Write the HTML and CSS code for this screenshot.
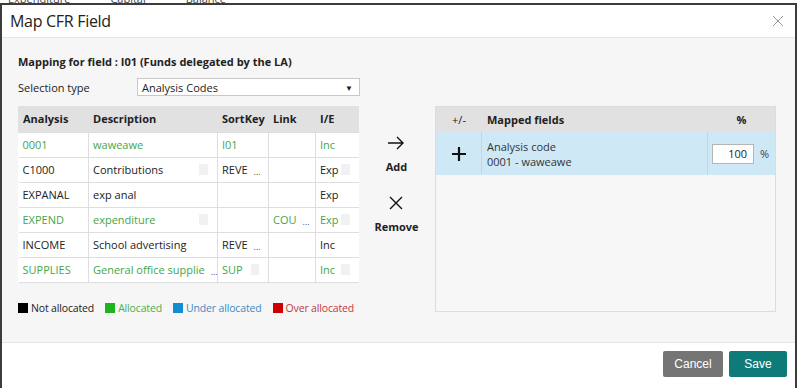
FILE: index.html
```html
<!DOCTYPE html>
<html>
<head>
<meta charset="utf-8">
<link rel="stylesheet" href="styles.css">
</head>
<body>
<div class="page-strip"><span>Expenditure</span><span>Capital</span><span>Balance</span></div>
<div class="modal">
  <div class="modal-header">
    <h1 class="modal-title">Map CFR Field</h1>
    <svg class="close" width="12" height="12" viewBox="0 0 12 12"><path d="M1 1 L11 11 M11 1 L1 11" stroke="#9a9a9a" stroke-width="1" fill="none"/></svg>
  </div>
  <div class="modal-body">
    <div class="field-title">Mapping for field : I01 (Funds delegated by the LA)</div>
    <div class="sel-row">
      <span class="sel-label">Selection type</span>
      <div class="select"><span>Analysis Codes</span><span class="caret">▼</span></div>
    </div>
    <div class="main">
      <div class="left">
        <table class="grid">
          <thead>
            <tr><th class="c1">Analysis</th><th class="c2">Description</th><th class="c3">SortKey</th><th class="c4">Link</th><th class="c5">I/E</th></tr>
          </thead>
          <tbody>
            <tr class="alloc"><td>0001</td><td>waweawe</td><td>I01</td><td></td><td>Inc</td></tr>
            <tr><td>C1000</td><td><div class="cell">Contributions<i class="sq"></i></div></td><td><div class="cell">REVE<b class="ell">...</b></div></td><td></td><td><div class="cell">Exp<i class="sq"></i></div></td></tr>
            <tr><td>EXPANAL</td><td>exp anal</td><td></td><td></td><td>Exp</td></tr>
            <tr class="alloc"><td>EXPEND</td><td><div class="cell">expenditure<i class="sq"></i></div></td><td></td><td><div class="cell">COU<b class="ell">...</b></div></td><td><div class="cell">Exp<i class="sq"></i></div></td></tr>
            <tr><td>INCOME</td><td>School advertising</td><td><div class="cell">REVE<b class="ell">...</b></div></td><td></td><td>Inc</td></tr>
            <tr class="alloc"><td>SUPPLIES</td><td><div class="cell">General office supplie<b class="ell">...</b></div></td><td><div class="cell">SUP<i class="sq sq-near"></i></div></td><td></td><td><div class="cell">Inc<i class="sq"></i></div></td></tr>
          </tbody>
        </table>
        <div class="legend">
          <span class="lg lg-none"><i class="sw"></i>Not allocated</span>
          <span class="lg lg-all"><i class="sw"></i>Allocated</span>
          <span class="lg lg-under"><i class="sw"></i>Under allocated</span>
          <span class="lg lg-over"><i class="sw"></i>Over allocated</span>
        </div>
      </div>
      <div class="actions">
        <div class="act">
          <svg width="18" height="14" viewBox="0 0 18 14"><path d="M1 7 H16 M10 1 L16 7 L10 13" stroke="#111" stroke-width="1.4" fill="none"/></svg>
          <span>Add</span>
        </div>
        <div class="act">
          <svg width="14" height="14" viewBox="0 0 14 14"><path d="M1 1 L13 13 M13 1 L1 13" stroke="#111" stroke-width="1.4" fill="none"/></svg>
          <span>Remove</span>
        </div>
      </div>
      <div class="mapped">
        <div class="m-head">
          <div class="m-c1">+/-</div>
          <div class="m-c2">Mapped fields</div>
          <div class="m-c3">%</div>
        </div>
        <div class="m-row">
          <div class="m-c1 plus">
            <svg width="14" height="14" viewBox="0 0 14 14"><path d="M7 0 V14 M0 7 H14" stroke="#111" stroke-width="2.2" fill="none"/></svg>
          </div>
          <div class="m-c2 m-text"><span class="m-line">Analysis code</span><span class="m-line">0001 - waweawe</span></div>
          <div class="m-c3 pct"><span class="pct-in">100</span><span class="pct-sym">%</span></div>
        </div>
      </div>
    </div>
  </div>
  <div class="modal-footer">
    <button class="btn btn-cancel">Cancel</button>
    <button class="btn btn-save">Save</button>
  </div>
</div>
</body>
</html>
```

FILE: styles.css
```css
* { box-sizing: border-box; }
html, body { margin: 0; padding: 0; }
body {
  width: 798px;
  height: 388px;
  overflow: hidden;
  background: #fff;
  font-family: "Open Sans", "Noto Sans", sans-serif;
  font-size: 11px;
  color: #222;
}
.page-strip {
  height: 3px;
  overflow: hidden;
  display: flex;
  gap: 40px;
  padding-left: 8px;
  font-size: 11px;
  line-height: 3px;
  color: #444;
}
.page-strip span { display: block; transform: translateY(-3px); }
.modal {
  width: 797px;
  height: 385px;
  border: 2px solid #3c3c3c;
  border-bottom: none;
  display: flex;
  flex-direction: column;
  background: #fff;
}
.modal-header {
  height: 33px;
  flex: none;
  display: flex;
  align-items: center;
  justify-content: space-between;
  padding: 0 10px 0 8px;
  border-bottom: 1px solid #e6e6e6;
}
.modal-title {
  margin: 0;
  font-weight: 400;
  font-size: 16px;
  color: #222;
  letter-spacing: -0.3px;
}
.close { margin-right: 1px; }
.modal-body {
  flex: none;
  height: 304px;
  background: #f6f6f6;
  padding: 16px 0 0 16px;
}
.field-title {
  font-weight: 700;
  font-size: 11px;
  line-height: 15px;
  color: #222;
}
.sel-row {
  display: flex;
  align-items: center;
  margin-top: 9px;
  height: 18px;
}
.sel-label { width: 119px; }
.select {
  width: 223px;
  height: 18px;
  background: #fff;
  border: 1px solid #c8c8c8;
  display: flex;
  align-items: center;
  justify-content: space-between;
  padding: 0 6px 0 4px;
}
.caret { font-size: 8px; color: #222; }
.main {
  display: flex;
  margin-top: 10px;
}
.left { width: 340px; }
table.grid {
  border-collapse: collapse;
  width: 340px;
  table-layout: fixed;
  background: #fff;
}
.grid th {
  background: #e1e1e1;
  height: 26px;
  text-align: left;
  font-weight: 700;
  padding: 0 4px;
  border-left: 1px solid #e1e1e1;
}
.grid td {
  height: 25px;
  padding: 0 4px;
  border: 1px solid #dedede;
  white-space: nowrap;
  overflow: hidden;
}
.grid tr td:first-child { border-left: none; }
.grid tr td:last-child { border-right: none; }
.c1 { width: 70px; }
.c2 { width: 129px; }
.c3 { width: 51px; }
.c4 { width: 47px; }
.c5 { width: 43px; }
.alloc td { color: #44a64a; }
.cell { display: flex; align-items: center; }
.sq {
  display: inline-block;
  width: 9px;
  height: 11px;
  background: #f1f1f1;
  margin-left: auto;
  margin-right: 5px;
}
.sq-near { margin-left: 8px; }
.ell {
  font-weight: 400;
  font-size: 9px;
  margin-left: 6px;
  position: relative;
  top: 2px;
  letter-spacing: 0;
  color: #555;
}
.legend {
  display: flex;
  gap: 11px;
  margin-top: 18px;
  font-size: 10.5px;
  white-space: nowrap;
  width: 380px;
  letter-spacing: -0.15px;
}
.lg { display: flex; align-items: center; }
.sw { display: inline-block; width: 10px; height: 10px; margin-right: 3px; }
.lg-none { color: #222; }
.lg-none .sw { background: #000; }
.lg-all { color: #4caf50; }
.lg-all .sw { background: #1db31d; }
.lg-under { color: #3a8cc6; }
.lg-under .sw { background: #158bd0; }
.lg-over { color: #c23a3a; }
.lg-over .sw { background: #cc0000; }
.actions {
  width: 77px;
  display: flex;
  flex-direction: column;
  align-items: center;
  padding-top: 30px;
  gap: 22px;
}
.act {
  display: flex;
  flex-direction: column;
  align-items: center;
  gap: 9px;
  font-weight: 700;
}
.mapped {
  width: 341px;
  height: 206px;
  border: 1px solid #dcdcdc;
  background: #f7f7f7;
}
.m-head {
  display: flex;
  height: 25px;
  background: #e1e1e1;
  align-items: center;
  font-weight: 700;
}
.m-c1 { width: 46px; text-align: center; }
.m-c2 { width: 226px; padding-left: 5px; }
.m-c3 { flex: 1; text-align: center; }
.m-head .m-c1 { font-weight: 400; }
.m-row {
  display: flex;
  height: 43px;
  background: #cfe8f6;
}
.m-row > div { display: flex; align-items: center; }
.m-row .m-c1 { justify-content: center; border-right: 1px solid #b9d9ea; }
.m-row .m-c2 { border-right: 1px solid #b9d9ea; }
.m-text { flex-direction: column; align-items: flex-start !important; justify-content: center; color: #333; }
.m-line { display: block; height: 15px; line-height: 15px; }
.pct { justify-content: flex-start; padding-left: 4px; }
.pct-in {
  width: 42px;
  height: 20px;
  background: #fff;
  border: 1px solid #b5b5b5;
  text-align: right;
  padding-right: 6px;
  line-height: 18px;
  color: #222;
}
.pct-sym { margin-left: 6px; color: #444; }
.modal-footer {
  flex: 1;
  border-top: 1px solid #e6e6e6;
  display: flex;
  justify-content: flex-end;
  align-items: flex-start;
  gap: 6px;
  padding: 8px 8px 0 0;
}
.btn {
  border: none;
  border-radius: 2px;
  height: 26px;
  color: #fff;
  font-family: "Liberation Sans", Arial, sans-serif;
  font-size: 12px;
  padding: 0;
}
.btn-cancel { width: 60px; background: #757575; }
.btn-save { width: 58px; background: #0f7b79; }
```
